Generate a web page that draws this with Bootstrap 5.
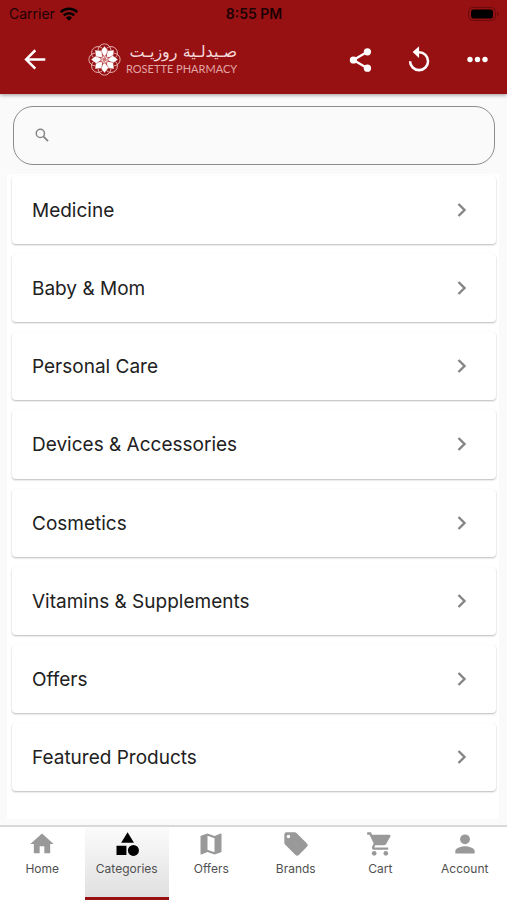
<!DOCTYPE html>
<html lang="en">
<head>
<meta charset="utf-8">
<meta name="viewport" content="width=device-width, initial-scale=1">
<title>Rosette Pharmacy</title>
<link href="https://cdn.jsdelivr.net/npm/bootstrap@5.3.0/dist/css/bootstrap.min.css" rel="stylesheet">
<style>
body { font-family: Inter, "Liberation Sans", "DejaVu Sans", sans-serif; background: #fafafa; color: #212121; }
svg { display: block; fill: currentColor; }
.app-header { background: #971113; box-shadow: 0 1px 4px rgba(0,0,0,.4); z-index: 2; }
.status-bar { padding: 2px 8px 0 9px; font-size: 14px; line-height: 24px; color: #1c0203; }
.status-side { flex: 1 1 0; }
.app-bar { height: 68px; padding: 0 16px 0 22px; }
.icon-btn { color: #fff; line-height: 1; }
.brand-link { margin-left: 40px; gap: 5px; color: #f6d9d9; }
.brand-ar { font-family: "DejaVu Sans", sans-serif; font-size: 16px; line-height: 18px; }
.brand-en { font-family: Lato, sans-serif; font-size: 11px; line-height: 16px; color: #e2a5a5; }
.header-actions { gap: 31px; }
.search-wrap { padding: 12px 12px 9px 13px; }
.search-box { height: 59px; border: 1px solid #8c8c8c; border-radius: 20px; padding: 0 20px; color: #858585; }
.search-box input { outline: 0; }
.list-panel { background: #fff; margin: 0 8px 6px 7px; padding: 2px 3px 28px 5px; gap: 10px; }
.cat-card { border-radius: 4px; padding: 2px 24px 0 20px; font-size: 19px; line-height: 24px; color: #212121; background: #fff; box-shadow: 0 1px 2px rgba(0,0,0,.28); }
.cat-card svg { color: #858585; }
.tab-bar { background: #fff; border-top: 2px solid #d9d9d9; }
.tab-item { height: 73px; padding-top: 3px; font-size: 12px; line-height: 16px; color: #505050; border-bottom: 3px solid transparent; gap: 3px; }
.tab-item svg { color: #999; }
.tab-item.current { background: linear-gradient(#fbfbfb, #e0e0e0); border-bottom-color: #971113; }
.tab-item.current svg { color: #000; }
</style>
<script src="https://cdn.jsdelivr.net/npm/bootstrap@5.3.0/dist/js/bootstrap.bundle.min.js" defer></script>
</head>
<body class="d-flex flex-column min-vh-100">
<header class="app-header position-relative">
  <div class="status-bar d-flex align-items-center">
    <div class="status-side d-flex align-items-center gap-1"><span>Carrier</span>
      <svg width="20" height="14" viewBox="0 0 20 14" aria-hidden="true"><g fill="none" stroke="#000" stroke-width="2.6"><path d="M1.8 5.2a11.6 11.6 0 0 1 16.4 0"/><path d="M4.8 8.4a7.4 7.4 0 0 1 10.4 0"/></g><path d="M10 13.8 7 10.7a4.3 4.3 0 0 1 6 0z" fill="#000"/></svg>
    </div>
    <span class="fw-semibold">8:55 PM</span>
    <div class="status-side d-flex justify-content-end">
      <svg width="32" height="14" viewBox="0 0 32 14" aria-hidden="true"><rect x="1.5" y=".5" width="27" height="13" rx="4" fill="none" stroke="#6a0b0d"/><rect x="4" y="2.5" width="22" height="9" rx="2.5" fill="#000"/><path d="M30 4.8c2 .8 2 3.6 0 4.4z" fill="#6a0b0d"/></svg>
    </div>
  </div>
  <div class="app-bar d-flex align-items-center">
    <button type="button" class="icon-btn btn p-0 border-0" aria-label="Back"><svg width="26" height="26" viewBox="0 0 24 24"><path d="M12.3 3 3.8 11.5l8.5 8.5M4 11.5h17.5" fill="none" stroke="currentColor" stroke-width="2.3"/></svg></button>
    <a href="#" class="brand-link d-flex align-items-center text-decoration-none">
      <svg width="33" height="34" viewBox="-17 -16.5 34 34" aria-hidden="true">
        <defs><path id="petal" d="M0-2.500 4.200-8.400 0-14-4.200-8.400z"/><circle id="loop" cy="-9.500" r="6.600"/></defs>
        <g fill="none" stroke="#eebcbc" stroke-width=".9"><use href="#loop"/><use href="#loop" transform="rotate(45)"/><use href="#loop" transform="rotate(90)"/><use href="#loop" transform="rotate(135)"/><use href="#loop" transform="rotate(180)"/><use href="#loop" transform="rotate(225)"/><use href="#loop" transform="rotate(270)"/><use href="#loop" transform="rotate(315)"/></g>
        <g fill="#fff" stroke="#971113" stroke-width=".4"><use href="#petal"/><use href="#petal" transform="rotate(45)"/><use href="#petal" transform="rotate(90)"/><use href="#petal" transform="rotate(135)"/><use href="#petal" transform="rotate(180)"/><use href="#petal" transform="rotate(225)"/><use href="#petal" transform="rotate(270)"/><use href="#petal" transform="rotate(315)"/></g>
        <circle r="4" fill="#cf7375"/><circle r="2.6" fill="none" stroke="#fff" stroke-width="1.3" stroke-dasharray="1.2 .8"/>
      </svg>
      <span class="d-flex flex-column"><span class="brand-ar text-nowrap" lang="ar" dir="rtl">صـيدلـية روزيـت</span><span class="brand-en text-nowrap">ROSETTE PHARMACY</span></span>
    </a>
    <div class="header-actions d-flex align-items-center ms-auto">
      <button type="button" class="icon-btn btn p-0 border-0" aria-label="Share"><svg width="28" height="28" viewBox="0 0 24 24"><path d="M17.5 5 5.500 12l12 7" fill="none" stroke="currentColor" stroke-width="2"/><circle cx="17.500" cy="5" r="3.100"/><circle cx="5.500" cy="12" r="3.100"/><circle cx="17.500" cy="19" r="3.100"/></svg></button>
      <button type="button" class="icon-btn btn p-0 border-0" aria-label="Reload"><svg width="28" height="28" viewBox="0.8 0.8 24 24"><path d="M12 5V1L6.500 6l5.500 5V7.200a6.600 6.600 0 1 1-6.600 6.600H3.200A8.800 8.800 0 1 0 12 5z"/></svg></button>
      <button type="button" class="icon-btn btn p-0 border-0" aria-label="More"><svg width="26" height="26" viewBox="0 0 26 26"><circle cx="5" cy="12.500" r="2.700"/><circle cx="12.500" cy="12.500" r="2.700"/><circle cx="20" cy="12.500" r="2.700"/></svg></button>
    </div>
  </div>
</header>
<main class="flex-fill d-flex flex-column">
  <div class="search-wrap">
    <label class="search-box d-flex align-items-center gap-2"><svg width="18" height="18" viewBox="1 1 24 24" aria-hidden="true"><circle cx="9.500" cy="9.500" r="5.500" fill="none" stroke="currentColor" stroke-width="2"/><path d="m13.500 13.500 6.200 6.200" stroke="currentColor" stroke-width="2.400"/></svg>
      <input type="search" class="flex-fill border-0 bg-transparent" aria-label="Search"></label>
  </div>
  <nav class="list-panel flex-fill d-flex flex-column" aria-label="Categories">
    <a href="#" class="cat-card flex-fill d-flex align-items-center justify-content-between text-decoration-none">Medicine<svg width="20" height="20" viewBox="0 0 20 20"><path id="chevron" d="m6.500 3 6 6-6 6" fill="none" stroke="currentColor" stroke-width="2.400"/></svg></a>
    <a href="#" class="cat-card flex-fill d-flex align-items-center justify-content-between text-decoration-none">Baby &amp; Mom<svg width="20" height="20" viewBox="0 0 20 20"><use href="#chevron"/></svg></a>
    <a href="#" class="cat-card flex-fill d-flex align-items-center justify-content-between text-decoration-none">Personal Care<svg width="20" height="20" viewBox="0 0 20 20"><use href="#chevron"/></svg></a>
    <a href="#" class="cat-card flex-fill d-flex align-items-center justify-content-between text-decoration-none">Devices &amp; Accessories<svg width="20" height="20" viewBox="0 0 20 20"><use href="#chevron"/></svg></a>
    <a href="#" class="cat-card flex-fill d-flex align-items-center justify-content-between text-decoration-none">Cosmetics<svg width="20" height="20" viewBox="0 0 20 20"><use href="#chevron"/></svg></a>
    <a href="#" class="cat-card flex-fill d-flex align-items-center justify-content-between text-decoration-none">Vitamins &amp; Supplements<svg width="20" height="20" viewBox="0 0 20 20"><use href="#chevron"/></svg></a>
    <a href="#" class="cat-card flex-fill d-flex align-items-center justify-content-between text-decoration-none">Offers<svg width="20" height="20" viewBox="0 0 20 20"><use href="#chevron"/></svg></a>
    <a href="#" class="cat-card flex-fill d-flex align-items-center justify-content-between text-decoration-none">Featured Products<svg width="20" height="20" viewBox="0 0 20 20"><use href="#chevron"/></svg></a>
  </nav>
</main>
<nav class="tab-bar row row-cols-6 g-0" aria-label="Main">
  <a href="#" class="tab-item col d-flex flex-column align-items-center text-decoration-none"><svg width="28" height="28" viewBox="0 0 24 24"><path d="M10 20v-6h4v6h5v-8h3L12 3 2 12h3v8z"/></svg>Home</a>
  <a href="#" class="tab-item current col d-flex flex-column align-items-center text-decoration-none" aria-current="page"><svg width="28" height="28" viewBox="0 0 24 24"><path d="m12.500 2-5.500 9h11zM3 13.500h8.500v8H3z"/><circle cx="17.500" cy="17.500" r="4.700"/></svg>Categories</a>
  <a href="#" class="tab-item col d-flex flex-column align-items-center text-decoration-none"><svg width="28" height="28" viewBox="0 0 24 24"><path d="m20.500 3-.16.030L15 5.100 9 3 3.360 4.900a.5.5 0 0 0-.36.480V20.500c0 .28.220.5.5.5l.16-.03L9 18.900l6 2.100 5.640-1.900a.5.5 0 0 0 .36-.48V3.500a.5.5 0 0 0-.5-.5zM15 19l-6-2.110V5l6 2.110z"/></svg>Offers</a>
  <a href="#" class="tab-item col d-flex flex-column align-items-center text-decoration-none"><svg width="28" height="28" viewBox="0 0 24 24"><path d="m21.410 11.580-9-9A2 2 0 0 0 11 2H4a2 2 0 0 0-2 2v7c0 .55.220 1.050.590 1.420l9 9a2 2 0 0 0 2.820 0l7-7a2 2 0 0 0 0-2.840zM5.500 7a1.500 1.500 0 1 1 0-3 1.500 1.500 0 0 1 0 3z"/></svg>Brands</a>
  <a href="#" class="tab-item col d-flex flex-column align-items-center text-decoration-none"><svg width="28" height="28" viewBox="0 0 24 24"><path d="M1 2v2h2l3.600 7.590-1.350 2.450C4.520 15.370 5.480 17 7 17h12v-2H7.420a.25.25 0 0 1-.22-.37L8.100 13h7.450c.75 0 1.410-.41 1.750-1.030l3.580-6.490A1 1 0 0 0 20 4H5.210l-.94-2z"/><circle cx="7" cy="20" r="2"/><circle cx="17" cy="20" r="2"/></svg>Cart</a>
  <a href="#" class="tab-item col d-flex flex-column align-items-center text-decoration-none"><svg width="28" height="28" viewBox="0 0 24 24"><circle cx="12" cy="8" r="4.200"/><path d="M12 14c-2.670 0-8.300 1.340-8.300 4v2.200h16.600V18c0-2.660-5.630-4-8.300-4z"/></svg>Account</a>
</nav>
</body>
</html>
